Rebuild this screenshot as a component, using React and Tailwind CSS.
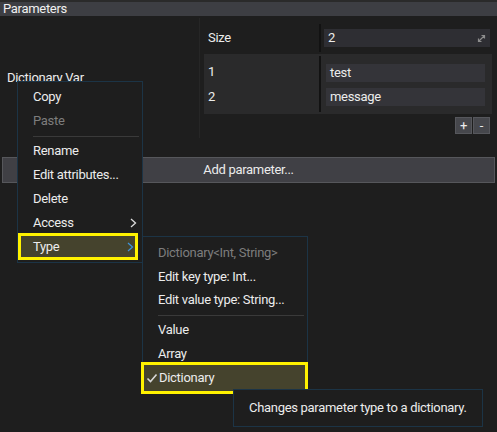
import React from "react";

function Chevron({ className }) {
    return (
        <svg width="7" height="10" viewBox="0 0 7 10" className={className}>
            <path d="M1 1 L5.5 5 L1 9" fill="none" stroke="currentColor" strokeWidth="1.3" />
        </svg>
    );
}

function MenuItem({ children, muted, chevron }) {
    return (
        <div className={`h-[24px] flex items-center pl-[15px] pr-[5px] ${muted ? "text-[#7d7d7d]" : ""}`}>
            <span className="flex-1">{children}</span>
            {chevron && <Chevron className="text-[#dcdcdc]" />}
        </div>
    );
}

export default function App() {
    return (
        <div className="relative w-[497px] h-[432px] overflow-hidden bg-[#1e1e1e] text-[13px] tracking-[-0.3px] text-[#ececec] font-['Roboto',sans-serif]">
            {/* header */}
            <div className="h-[2px] bg-[#2a2a2a]" />
            <div className="h-[14px] leading-[14px] px-[3px] bg-[#3d3e43] text-[#f0f0f0]">Parameters</div>

            {/* body */}
            <div className="flex h-[122px]">
                <div className="w-[199px] pl-[7px] pt-[54px] leading-[16px]">Dictionary Var</div>
                <div className="w-px mt-[2px] bg-[#262626]" />
                <div className="flex-1 pl-[4px]">
                    <div className="mt-[8px] h-[28px] flex items-center">
                        <div className="w-[115px] pl-[4px]">Size</div>
                        <div className="w-[2px] self-stretch bg-[#121212]" />
                        <div className="ml-[3px] w-[166px] h-[18px] bg-[#2e2e33] flex items-center pl-[4px] pr-[4px]">
                            <span className="flex-1">2</span>
                            <svg width="9" height="9" viewBox="0 0 9 9" className="text-[#8c8c8c]">
                                <path d="M1.5 7.5 L7.5 1.5 M4.5 1.5 H7.5 V4.5 M1.5 4.5 V7.5 H4.5" fill="none" stroke="currentColor" strokeWidth="1.2" />
                            </svg>
                        </div>
                    </div>
                    <div className="mt-[2px] h-[60px] w-[288px] bg-[#2a2a2b] flex py-[2px]">
                        <div className="w-[115px] pl-[4px] flex flex-col">
                            <div className="h-[22px] mt-[5px] flex items-center">1</div>
                            <div className="h-[22px] mt-[3px] flex items-center">2</div>
                        </div>
                        <div className="w-[2px] bg-[#121212]" />
                        <div className="pl-[5px] flex flex-col gap-[6px] pt-[8px]">
                            <div className="w-[159px] h-[18px] bg-[#343439] flex items-center pl-[4px]">test</div>
                            <div className="w-[159px] h-[18px] bg-[#343439] flex items-center pl-[4px]">message</div>
                        </div>
                    </div>
                    <div className="mt-[3px] flex justify-end gap-px pr-[7px]">
                        <div className="w-[17px] h-[17px] bg-[#46474c] border border-[#56575c] flex items-center justify-center leading-none">+</div>
                        <div className="w-[17px] h-[17px] bg-[#46474c] border border-[#56575c] flex items-center justify-center leading-none">-</div>
                    </div>
                </div>
            </div>

            <div className="mx-[2px] mt-[19px] h-[26px] bg-[#404045] border border-[#56575b] flex items-center justify-center">
                Add parameter...
            </div>

            {/* context menu */}
            <div className="absolute left-[17px] top-[81px] w-[126px] h-[182px] bg-[#1e1e1e] border border-[#1c3446] pt-[3px]">
                <MenuItem>Copy</MenuItem>
                <MenuItem muted>Paste</MenuItem>
                <div className="h-[6px] flex items-center pl-[15px] pr-[3px]">
                    <div className="h-px flex-1 bg-[#3a3a3a]" />
                </div>
                <MenuItem>Rename</MenuItem>
                <MenuItem>Edit attributes...</MenuItem>
                <MenuItem>Delete</MenuItem>
                <MenuItem chevron>Access</MenuItem>
                <div className="mr-[4px] h-[27px] -mt-[2px] border-[3px] border-[#fff200] bg-[#45432d] flex items-center pl-[12px] pr-[1px]">
                    <span className="flex-1">Type</span>
                    <Chevron className="text-[#3f93d8]" />
                </div>
            </div>

            {/* submenu */}
            <div className="absolute left-[142px] top-[236px] w-[166px] h-[158px] bg-[#1e1e1e] border border-[#1c3446] pt-[4px]">
                <div className="h-[24px] flex items-center pl-[15px] text-[#7d7d7d]">Dictionary&lt;Int, String&gt;</div>
                <div className="h-[23px] flex items-center pl-[15px]">Edit key type: Int...</div>
                <div className="h-[24px] flex items-center pl-[15px]">Edit value type: String...</div>
                <div className="h-[6px] flex items-center pl-[15px] pr-[3px]">
                    <div className="h-px flex-1 bg-[#3a3a3a]" />
                </div>
                <div className="h-[24px] flex items-center pl-[15px]">Value</div>
                <div className="h-[24px] flex items-center pl-[15px]">Array</div>
            </div>
            <div className="absolute left-[141px] top-[362px] w-[167px] h-[32px] border-[3px] border-[#fff200] bg-[#45432d] flex items-center pl-[2px]">
                <svg width="12" height="12" viewBox="0 0 12 12" className="text-[#d8d8d8] mr-[1px]">
                    <path d="M1.5 6.5 L4.5 9.5 L10.5 2.5" fill="none" stroke="currentColor" strokeWidth="1.6" />
                </svg>
                <span>Dictionary</span>
            </div>

            {/* tooltip */}
            <div className="absolute left-[233px] top-[389px] w-[250px] h-[38px] bg-[#1e1e1e] border border-[#1c3446] flex items-center pl-[15px]">
                Changes parameter type to a dictionary.
            </div>
        </div>
    );
}
